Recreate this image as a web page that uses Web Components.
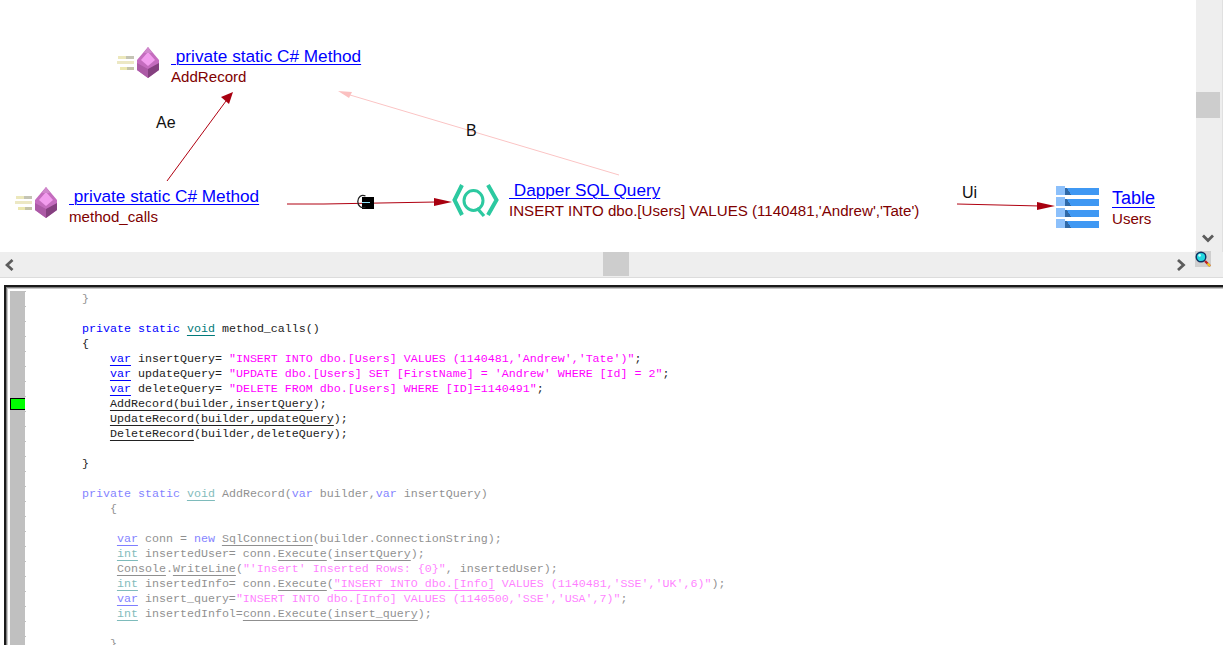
<!DOCTYPE html>
<html>
<head>
<meta charset="utf-8">
<title>Method graph</title>
<style>
  html, body { margin: 0; height: 100%; background: #fff; overflow: hidden; }
  body { width: 1223px; height: 645px; display: flex; flex-direction: column; }
</style>
</head>
<body>
<graph-panel>
  <graph-node style="left:115px;top:44px" kind="method" title-text=" private static C# Method" detail="AddRecord"></graph-node>
  <graph-node style="left:13px;top:184px" kind="method" title-text=" private static C# Method" detail="method_calls"></graph-node>
  <graph-node style="left:451px;top:178px" kind="query" title-text=" Dapper SQL Query" detail="INSERT INTO dbo.[Users] VALUES (1140481,'Andrew','Tate')"></graph-node>
  <graph-node style="left:1054px;top:186px" kind="table" title-text="Table" detail="Users"></graph-node>
</graph-panel>
<code-pane></code-pane>

<script>
if (!customElements.get('graph-node')) {
    const icons = {
        method: `<svg width="46" height="36" viewBox="0 0 46 36">
            <g shape-rendering="crispEdges">
            <rect x="3" y="12" width="8" height="3" fill="#ece8bc"/><rect x="11" y="12" width="8" height="3" fill="#c4c4b4"/>
            <rect x="2" y="17" width="17" height="3" fill="#ece8c4"/>
            <rect x="5" y="23" width="7" height="3" fill="#ece8b0"/><rect x="12" y="23" width="7" height="3" fill="#c4c4a8"/>
            </g>
            <polygon points="33,3 44,16 44,26 33,34 22,26 22,16" fill="#c46cbe"/>
            <polygon points="33,8 40,16 33,22 26,16" fill="#f29cee"/>
            <polygon points="33,3 37,9 29,9" fill="#d088cc"/>
            <polygon points="33,25 44,19 44,26 33,34" fill="#84407f"/>
            <polygon points="33,25 22,19 22,26 33,34" fill="#ac5aa6"/>
        </svg>`,
        query: `<svg width="48" height="42" viewBox="0 0 48 42" fill="none" stroke="#2cc9a0">
            <path d="M11 7 L3.5 22 L11 37" stroke-width="4"/>
            <path d="M37 7 L45.5 22 L37 37" stroke-width="4"/>
            <ellipse cx="22.5" cy="22.5" rx="9.5" ry="10" stroke-width="3"/>
            <path d="M26 30 L33 38" stroke-width="3.4"/>
        </svg>`,
        table: `<svg width="46" height="45" viewBox="0 0 46 45" shape-rendering="crispEdges">
            ${[0, 11, 22, 33].map(y => `
            <rect x="2" y="${y + 2}" width="43" height="7" fill="#3f98f3"/>
            <rect x="2" y="${y}" width="9" height="9" fill="#8cc0fb"/>
            <polygon points="11,${y + 2} 13,${y + 2} 17,${y + 9} 11,${y + 9}" fill="#2f69a8"/>`).join('')}
        </svg>`
    };
    class GraphNode extends HTMLElement {
        connectedCallback() {
            const kind = this.getAttribute('kind');
            this.attachShadow({ mode: 'open' });
            this.shadowRoot.innerHTML = `
                <style>
                    :host {
                        position: absolute;
                        display: flex;
                        align-items: flex-start;
                        white-space: pre;
                        font-family: "Liberation Sans", Arial, sans-serif;
                    }
                    .icon { flex: none; line-height: 0; width: 56px; height: 34px; }
                    :host([kind="query"]) .icon { width: 58px; }
                    :host([kind="table"]) .icon { width: 58px; }
                    a {
                        display: block;
                        color: #0000ff;
                        font-size: 17.2px;
                        line-height: 18px;
                        text-decoration: underline;
                        text-decoration-thickness: 1px;
                        text-underline-offset: 2px;
                        margin-top: 3px;
                    }
                    div.detail {
                        color: #800000;
                        font-size: 15.1px;
                        line-height: 18px;
                        margin-top: 3px;
                    }
                    :host([kind="table"]) a { font-size: 18px; text-underline-offset: 3px; }
                </style>
                <div class="icon">${icons[kind]}</div>
                <div><a>${this.getAttribute('title-text')}</a><div class="detail">${this.getAttribute('detail')}</div></div>
            `;
        }
    }
    customElements.define('graph-node', GraphNode);

    class ScrollBar extends HTMLElement {
        connectedCallback() {
            this.attachShadow({ mode: 'open' });
            this.shadowRoot.innerHTML = `
                <style>
                    :host { display: block; background: #eeeeee; position: relative; }
                    .thumb { position: absolute; background: #cdcdcd; }
                    :host([dir="v"]) .thumb { left: 0; top: 92px; width: 24px; height: 26px; }
                    :host([dir="h"]) .thumb { left: 603px; top: 0; width: 26px; height: 24px; }
                    svg { position: absolute; }
                    :host([dir="v"]) svg { left: 6px; top: 234px; }
                    :host([dir="h"]) .back { left: 5px; top: 7px; }
                    :host([dir="h"]) .fwd { left: 1176px; top: 7px; }
                </style>
                <div class="thumb"></div>
                ${this.getAttribute('dir') === 'v'
                    ? `<svg width="12" height="9" viewBox="0 0 12 9"><path d="M1 1.5 L6 6.5 L11 1.5" fill="none" stroke="#5c5c5c" stroke-width="2.8"/></svg>`
                    : `<svg class="back" width="10" height="12" viewBox="0 0 10 12"><path d="M7.5 1 L2 6 L7.5 11" fill="none" stroke="#5c5c5c" stroke-width="2.8"/></svg>
                       <svg class="fwd" width="10" height="12" viewBox="0 0 10 12"><path d="M2 1 L7.5 6 L2 11" fill="none" stroke="#5c5c5c" stroke-width="2.8"/></svg>`}
            `;
        }
    }
    customElements.define('scroll-bar', ScrollBar);

    class GraphPanel extends HTMLElement {
        connectedCallback() {
            this.attachShadow({ mode: 'open' });
            this.shadowRoot.innerHTML = `
                <style>
                    :host { display: block; flex: none; height: 285px; background: #fff; }
                    .top { display: flex; height: 252px; }
                    .canvas { position: relative; width: 1196px; overflow: hidden; font: 16px "Liberation Sans", Arial, sans-serif; color: #111; }
                    scroll-bar[dir="v"] { width: 27px; border-right: 1px solid #e0e0e0; box-sizing: border-box; }
                    .bottom { display: flex; height: 25px; background: #eeeeee; border-bottom: 1px solid #dcdcdc; }
                    scroll-bar[dir="h"] { flex: 1; }
                    .zoom { flex: none; width: 16px; height: 16px; margin: -1px 12px 0 -16px; background: #cfcfcf; line-height: 0; position: relative; }
                    svg.edges { position: absolute; inset: 0; }
                    .label { position: absolute; line-height: 18px; }
                    .glyph { position: absolute; left: 357px; top: 194px; width: 18px; height: 16px; }
                </style>
                <div class="top">
                    <div class="canvas">
                        <svg class="edges" width="1196" height="252" fill="none">
                            <path d="M167 181 L226 101" stroke="#b00010" stroke-width="1"/>
                            <polygon points="233,92 229,104 221,97" fill="#a80010"/>
                            <path d="M619 175 L350 95" stroke="#fbc4c4" stroke-width="1"/>
                            <polygon points="338,91 352,92 349,98" fill="#fbc0c0"/>
                            <path d="M287 204 L324 204 L436 202" stroke="#b00010" stroke-width="1"/>
                            <polygon points="452,202 434,198 434,206" fill="#a80010"/>
                            <path d="M957 204 L1040 206" stroke="#b00010" stroke-width="1"/>
                            <polygon points="1055,206 1037,202 1037,210" fill="#a80010"/>
                        </svg>
                        <svg class="glyph" viewBox="0 0 18 16">
                            <rect x="5" y="3" width="12" height="12" fill="#000"/>
                            <path d="M8.5 2 C4 0 .8 3.5 .8 7.5 C.8 11.5 4 15 8.5 13" fill="none" stroke="#222" stroke-width="1.3"/>
                            <rect x="5" y="8" width="8" height="1" fill="#8fe8ff"/>
                        </svg>
                        <span class="label" style="left:156px;top:114px">Ae</span>
                        <span class="label" style="left:466px;top:122px">B</span>
                        <span class="label" style="left:962px;top:184px">Ui</span>
                        <slot></slot>
                    </div>
                    <scroll-bar dir="v"></scroll-bar>
                </div>
                <div class="bottom">
                    <scroll-bar dir="h"></scroll-bar>
                    <div class="zoom">
                        <svg width="16" height="16" viewBox="0 0 16 16">
                            <path d="M10 10 L15 15" stroke="#c02020" stroke-width="2.4"/>
                            <path d="M12.5 12.5 L15 15" stroke="#f0d020" stroke-width="2"/>
                            <circle cx="6" cy="6" r="4.8" fill="#22d8e0" stroke="#103060" stroke-width="1.4"/>
                            <circle cx="4.6" cy="4.4" r="1.3" fill="#c8ffff"/>
                        </svg>
                    </div>
                </div>
            `;
        }
    }
    customElements.define('graph-panel', GraphPanel);

    // tiny helpers for the code lines
    const k = s => `<i class="kw">${s}</i>`;
    const vr = s => `<i class="kw u">${s}</i>`;
    const ty = s => `<i class="ty u">${s}</i>`;
    const st = s => `<i class="st">${s}</i>`;
    const u = s => `<i class="u">${s}</i>`;
    const sig = (fn, rest) => `${k('private')} ${k('static')} ${ty('void')} ${fn}${rest}`;

    const lines = [
        ['f', '        }'],
        ['', ''],
        ['', '        ' + sig('method_calls', '()')],
        ['', '        {'],
        ['', `            ${vr('var')} insertQuery= ${st(`"INSERT INTO dbo.[Users] VALUES (1140481,'Andrew','Tate')"`)};`],
        ['', `            ${vr('var')} updateQuery= ${st(`"UPDATE dbo.[Users] SET [FirstName] = 'Andrew' WHERE [Id] = 2"`)};`],
        ['', `            ${vr('var')} deleteQuery= ${st(`"DELETE FROM dbo.[Users] WHERE [ID]=1140491"`)};`],
        ['', `            ${u('AddRecord(builder,insertQuery')});`],
        ['', `            ${u('UpdateRecord(builder,updateQuery')});`],
        ['', `            ${u('DeleteRecord')}(builder,deleteQuery);`],
        ['', ''],
        ['', '        }'],
        ['', ''],
        ['f', '        ' + sig('AddRecord', `(${k('var')} builder,${k('var')} insertQuery)`)],
        ['f', '            {'],
        ['f', ''],
        ['f', `             ${vr('var')} conn = ${k('new')} ${u('SqlConnection')}(builder.ConnectionString);`],
        ['f', `             ${ty('int')} insertedUser= conn.${u('Execute')}(${u('insertQuery')});`],
        ['f', `             ${u('Console')}.${u('WriteLine')}(${st(`"'Insert' Inserted Rows: {0}"`)}, insertedUser);`],
        ['f', `             ${ty('int')} insertedInfo= conn.${u('Execute')}(${st(`<i class="u">"INSERT INTO dbo.[Info]</i> VALUES (1140481,'SSE','UK',6)"`)});`],
        ['f', `             ${vr('var')} insert_query=${st(`"INSERT INTO dbo.[Info] VALUES (1140500,'SSE','USA',7)"`)};`],
        ['f', `             ${ty('int')} insertedInfol=${u('conn.Execute(insert_query')});`],
        ['f', ''],
        ['f', '            }']
    ];

    class CodePane extends HTMLElement {
        connectedCallback() {
            this.attachShadow({ mode: 'open' });
            this.shadowRoot.innerHTML = `
                <style>
                    :host {
                        display: flex;
                        flex: 1;
                        min-height: 0;
                        margin-left: 4px;
                        border-top: 2px solid #1a1a1a;
                        border-left: 2px solid #1a1a1a;
                        box-shadow: inset 1px 1px 0 #808080, inset 2px 2px 0 #c8c8c8;
                        background: #fff;
                        overflow: hidden;
                    }
                    .gutter {
                        flex: none;
                        width: 15px;
                        margin-left: 4px;
                        margin-top: 4px;
                        background: #c0c0c0;
                        position: relative;
                    }
                    .gutter::after {
                        content: '';
                        position: absolute;
                        top: 0; bottom: 0; right: -1px;
                        width: 1px;
                        background: repeating-linear-gradient(#c0c0c0 0 1px, transparent 1px 15px);
                    }
                    .mark {
                        position: absolute;
                        left: 0; right: 0; top: 107px; height: 12px;
                        box-sizing: border-box;
                        background: #00ff00;
                        border: 1px solid #000;
                        border-width: 1px 0 1px 1px;
                    }
                    pre {
                        margin: 0;
                        padding: 5px 0 0 1px;
                        font: 11.67px/15px "Liberation Mono", "Courier New", monospace;
                        color: #222;
                    }
                    .row { height: 15px; }
                    .f { opacity: .5; }
                    i { font-style: normal; }
                    .kw { color: #0000ff; }
                    .ty { color: #007a7a; }
                    .st { color: #ff00ff; }
                    .u { text-decoration: underline; text-decoration-thickness: 1px; text-underline-offset: 3px; }
                </style>
                <div class="gutter"><div class="mark"></div></div>
                <pre>${lines.map(([c, s]) => `<div class="row ${c}">${s}</div>`).join('')}</pre>
            `;
        }
    }
    customElements.define('code-pane', CodePane);
}
</script>
</body>
</html>
